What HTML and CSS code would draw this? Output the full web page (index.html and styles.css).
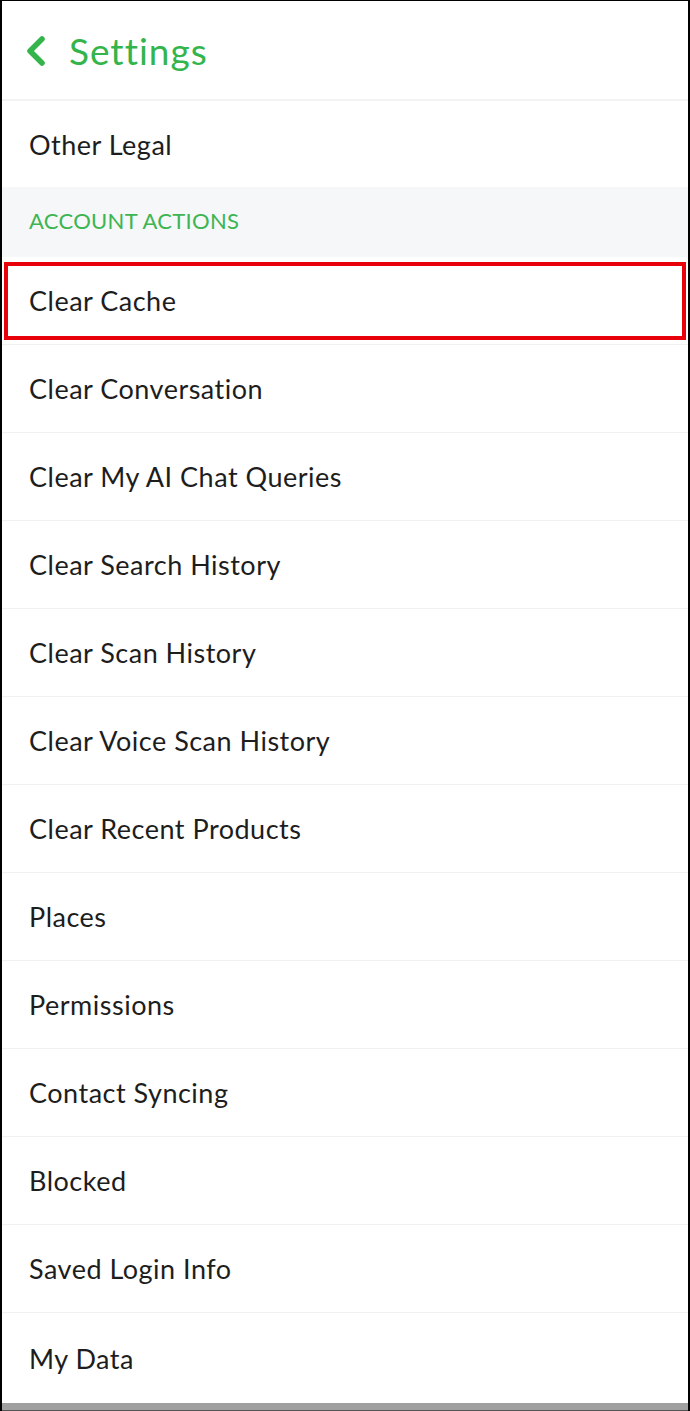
FILE: index.html
```html
<!DOCTYPE html>
<html>
<head>
<meta charset="utf-8">
<link rel="stylesheet" href="styles.css">
</head>
<body>
<div class="screen">
  <header class="topbar">
    <svg class="back" width="22" height="32" viewBox="0 0 22 32"><path d="M17 4 L5 16 L17 28" fill="none" stroke="#33b54b" stroke-width="5.5" stroke-linecap="round" stroke-linejoin="round"/></svg>
    <h1 class="title">Settings</h1>
  </header>
  <div class="row row-first">Other Legal</div>
  <div class="section">ACCOUNT ACTIONS</div>
  <div class="list">
    <div class="row highlight">Clear Cache</div>
    <div class="row">Clear Conversation</div>
    <div class="row">Clear My AI Chat Queries</div>
    <div class="row">Clear Search History</div>
    <div class="row">Clear Scan History</div>
    <div class="row">Clear Voice Scan History</div>
    <div class="row">Clear Recent Products</div>
    <div class="row">Places</div>
    <div class="row">Permissions</div>
    <div class="row">Contact Syncing</div>
    <div class="row">Blocked</div>
    <div class="row">Saved Login Info</div>
    <div class="row row-last">My Data</div>
  </div>
  <div class="bottombar"></div>
</div>
</body>
</html>
```
FILE: styles.css
```css
html, body {
  margin: 0;
  padding: 0;
  background: #fff;
}
.screen {
  width: 690px;
  height: 1411px;
  box-sizing: border-box;
  border-top: 1px solid #000;
  border-left: 2px solid #000;
  border-right: 2px solid #000;
  display: flex;
  flex-direction: column;
  font-family: "Lato", "Open Sans", sans-serif;
  overflow: hidden;
}
.topbar {
  height: 98px;
  flex: none;
  display: flex;
  align-items: center;
  padding-left: 23px;
  gap: 22px;
  border-bottom: 2px solid #f3f3f3;
}
.back {
  display: block;
  margin-top: 2px;
}
.title {
  margin: 0;
  font-size: 37px;
  font-weight: 400;
  color: #33b54b;
  letter-spacing: 1px;
}
.row {
  position: relative;
  height: 88px;
  flex: none;
  box-sizing: border-box;
  display: flex;
  align-items: center;
  padding-left: 27px;
  font-size: 27px;
  color: #1d1d1d;
  border-bottom: 1px solid #f0f0f0;
  letter-spacing: 0.5px;
}
.row-first {
  height: 86px;
  border-bottom: none;
}
.row-last {
  height: 90px;
  border-bottom: none;
}
.section {
  height: 70px;
  flex: none;
  display: flex;
  align-items: center;
  padding-left: 27px;
  padding-bottom: 3px;
  box-sizing: border-box;
  background: #f6f7f8;
  color: #3cb552;
  font-size: 22px;
  letter-spacing: 0.3px;
}
.list {
  display: flex;
  flex-direction: column;
}
.highlight::after {
  content: "";
  position: absolute;
  left: 2px;
  right: 2px;
  top: 5px;
  bottom: 4px;
  border: 4px solid #e8000b;
}
.bottombar {
  margin-top: auto;
  height: 7px;
  flex: none;
  background: #a0a0a0;
  border-bottom: 1px solid #555;
}
```
